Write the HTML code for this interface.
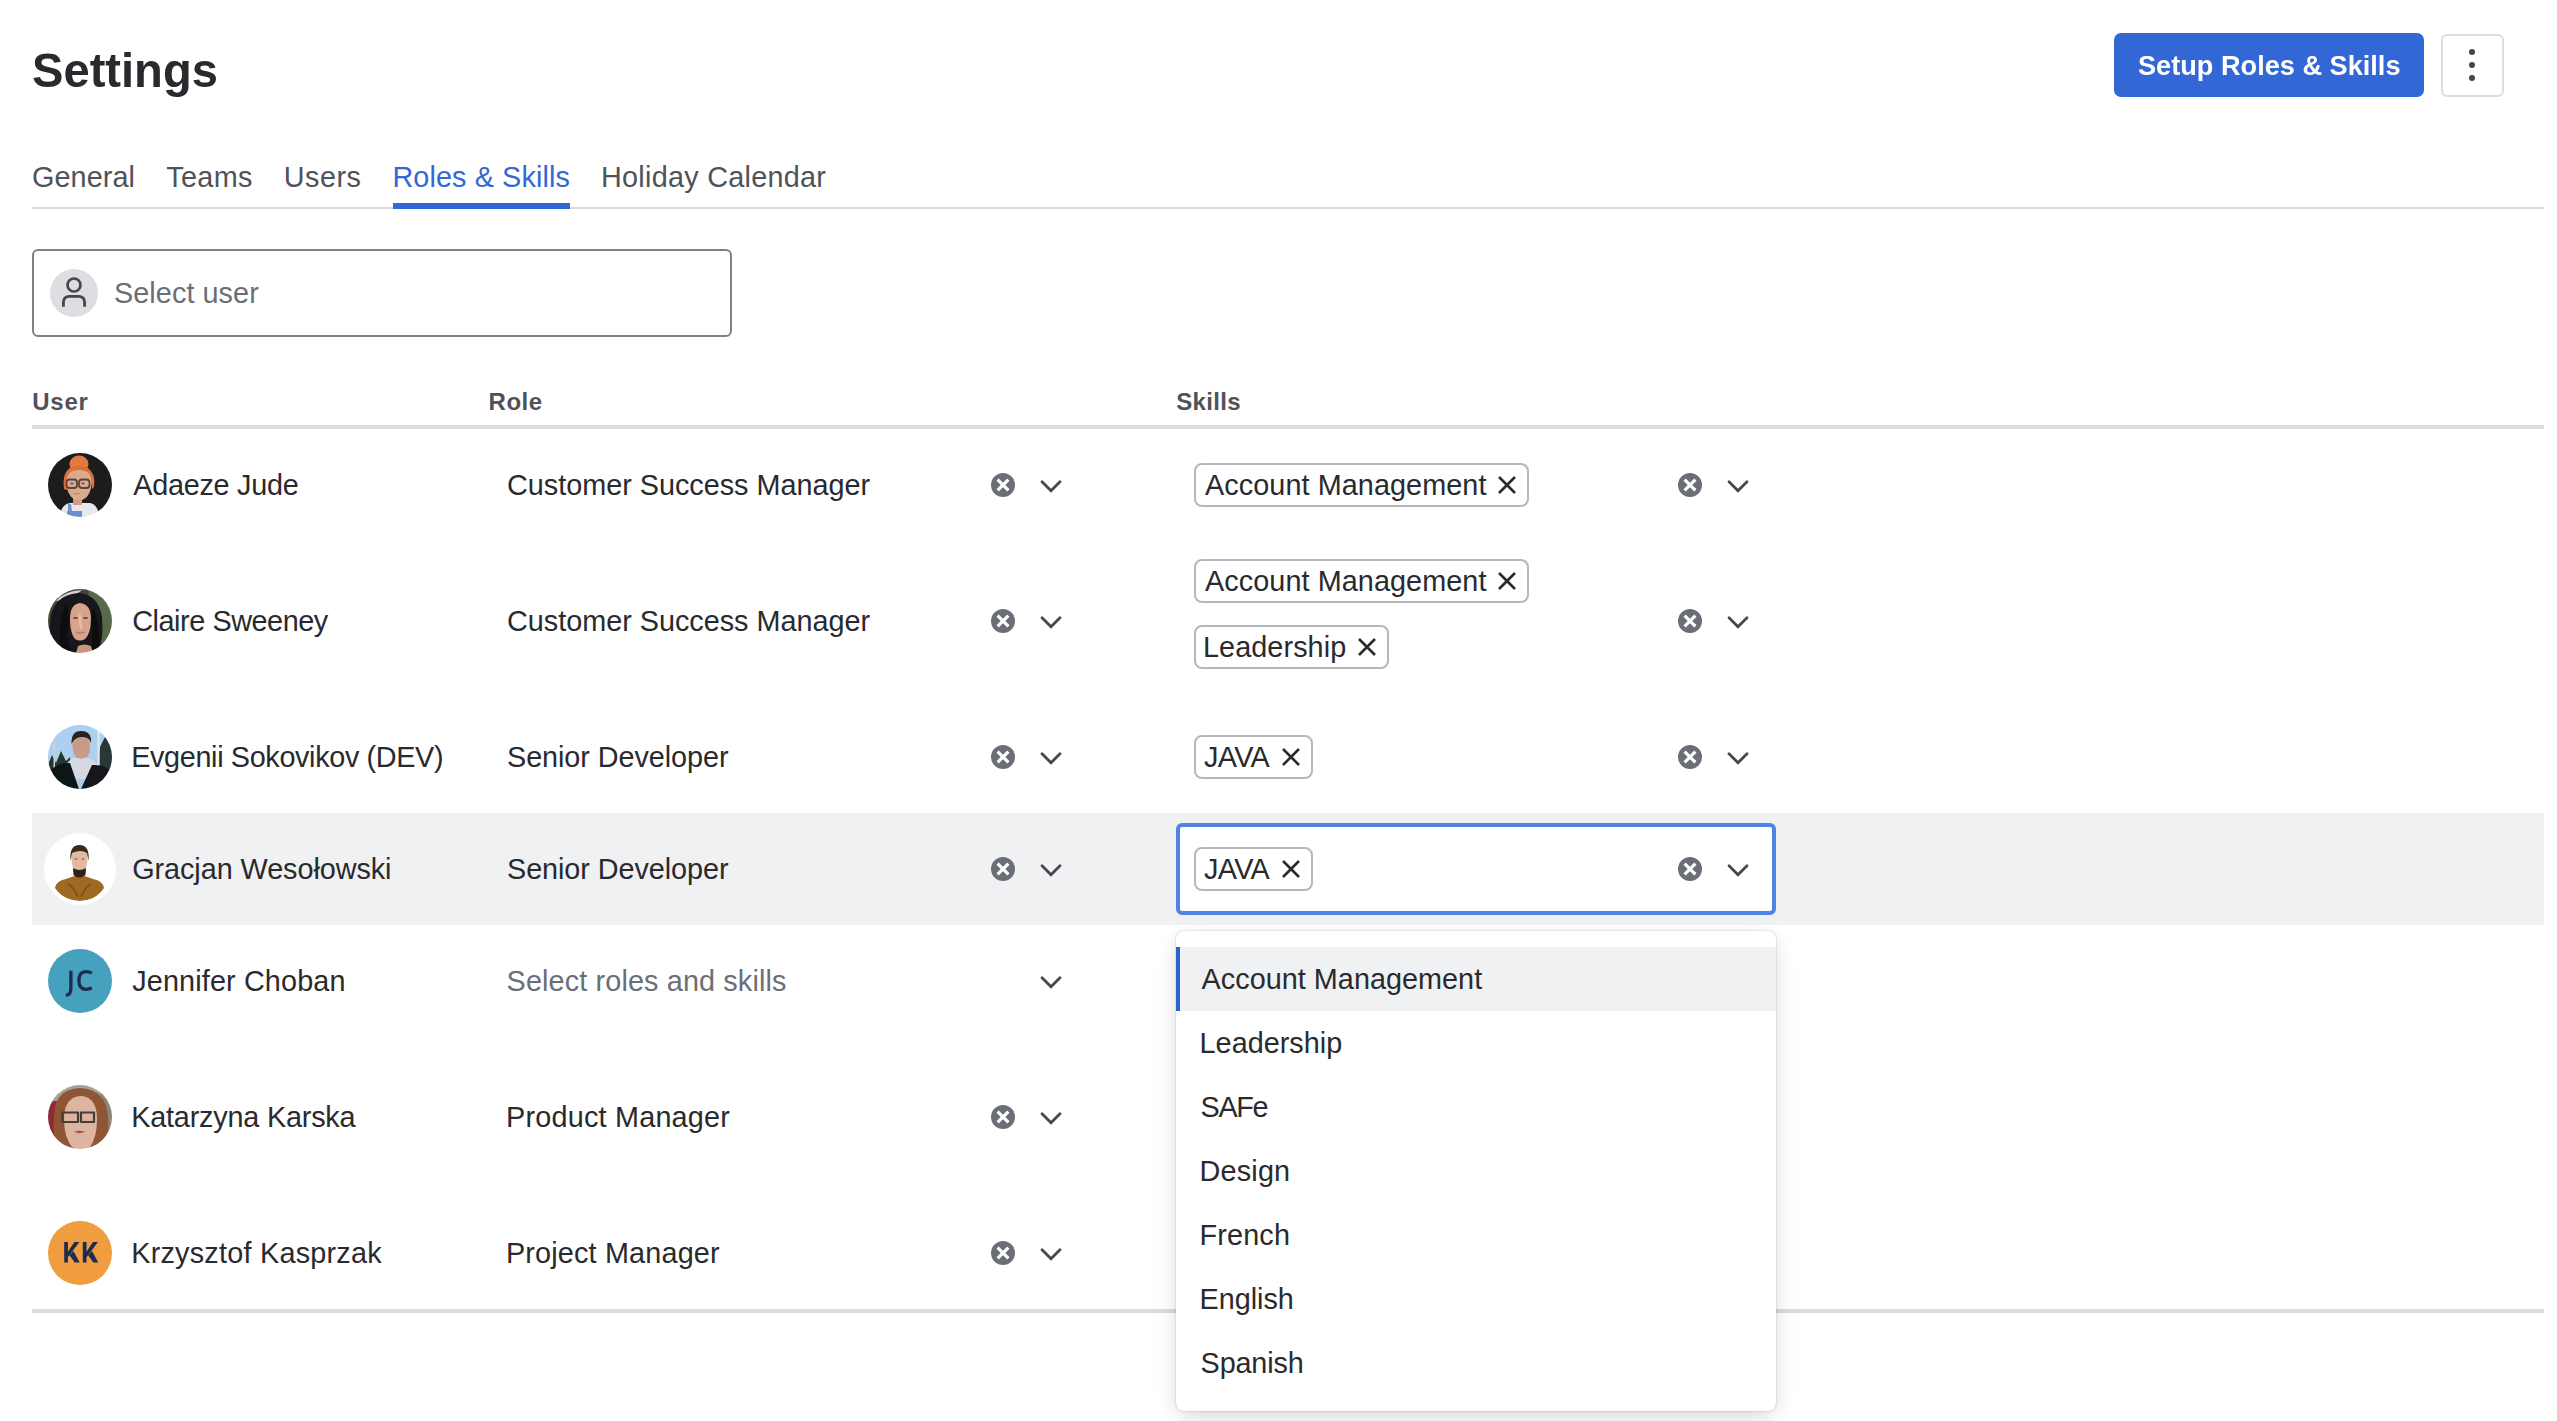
<!DOCTYPE html><html><head><meta charset="utf-8"><style>
html,body{margin:0;padding:0;background:#fff;width:2557px;height:1421px;overflow:hidden;position:relative}
.t{position:absolute;white-space:nowrap;font-family:"Liberation Sans",sans-serif}
</style></head><body>
<div class="t" style="left:32.34px;top:45.7px;font-size:49px;line-height:49px;font-weight:700;color:#292a2e;letter-spacing:0.000px;transform:scaleX(0.9616);transform-origin:0 0;">Settings</div>
<div style="position:absolute;left:2114px;top:33px;width:310px;height:64px;box-sizing:border-box;background:#3367d5;border-radius:7px"></div>
<div class="t" style="left:2138.05px;top:51.3px;font-size:28.5px;line-height:28.5px;font-weight:700;color:#fff;letter-spacing:0.000px;transform:scaleX(0.9526);transform-origin:0 0;">Setup Roles &amp; Skills</div>
<div style="position:absolute;left:2441px;top:34px;width:63px;height:63px;box-sizing:border-box;border:2px solid #dcdde0;border-radius:6px;background:#fff"></div>
<div style="position:absolute;left:2469px;top:49px;width:6px;height:6px;box-sizing:border-box;background:#44464d;border-radius:50%"></div>
<div style="position:absolute;left:2469px;top:62px;width:6px;height:6px;box-sizing:border-box;background:#44464d;border-radius:50%"></div>
<div style="position:absolute;left:2469px;top:75px;width:6px;height:6px;box-sizing:border-box;background:#44464d;border-radius:50%"></div>
<div class="t" style="left:32.10px;top:162.8px;font-size:28.8px;line-height:28.8px;font-weight:400;color:#505258;letter-spacing:0.050px;">General</div>
<div class="t" style="left:166.30px;top:162.8px;font-size:28.8px;line-height:28.8px;font-weight:400;color:#505258;letter-spacing:0.325px;">Teams</div>
<div class="t" style="left:283.80px;top:162.8px;font-size:28.8px;line-height:28.8px;font-weight:400;color:#505258;letter-spacing:0.475px;">Users</div>
<div class="t" style="left:392.40px;top:162.8px;font-size:28.8px;line-height:28.8px;font-weight:400;color:#3367d5;letter-spacing:0.108px;">Roles &amp; Skills</div>
<div class="t" style="left:601.00px;top:162.8px;font-size:28.8px;line-height:28.8px;font-weight:400;color:#505258;letter-spacing:0.267px;">Holiday Calendar</div>
<div style="position:absolute;left:32px;top:207px;width:2512px;height:2px;box-sizing:border-box;background:#d9dadb"></div>
<div style="position:absolute;left:393px;top:203px;width:177px;height:6px;box-sizing:border-box;background:#3367d5"></div>
<div style="position:absolute;left:32px;top:249px;width:700px;height:88px;box-sizing:border-box;border:2px solid #7d818a;border-radius:6px"></div>
<div style="position:absolute;left:50px;top:269px;width:48px;height:48px;box-sizing:border-box;background:#dddee2;border-radius:50%"></div>
<svg style="position:absolute;left:58px;top:277px" width="32" height="32" viewBox="0 0 32 32"><circle cx="16" cy="8" r="6.5" fill="none" stroke="#46474d" stroke-width="2.7"/><path d="M5.4 29.8V25.5Q5.4 19.4 11.5 19.4H20.5Q26.6 19.4 26.6 25.5V29.8" fill="none" stroke="#46474d" stroke-width="2.8"/></svg>
<div class="t" style="left:114.00px;top:279.0px;font-size:28.8px;line-height:28.8px;font-weight:400;color:#6b6e76;letter-spacing:0.070px;">Select user</div>
<div class="t" style="left:32.20px;top:389.8px;font-size:24px;line-height:24px;font-weight:700;color:#505258;letter-spacing:0.767px;">User</div>
<div class="t" style="left:488.60px;top:389.8px;font-size:24px;line-height:24px;font-weight:700;color:#505258;letter-spacing:0.467px;">Role</div>
<div class="t" style="left:1176.20px;top:389.8px;font-size:24px;line-height:24px;font-weight:700;color:#505258;letter-spacing:0.320px;">Skills</div>
<div style="position:absolute;left:32px;top:425px;width:2512px;height:4px;box-sizing:border-box;background:#dcdcdd"></div>
<div style="position:absolute;left:32px;top:813px;width:2512px;height:112px;box-sizing:border-box;background:#f0f1f2"></div>
<svg style="position:absolute;left:48px;top:453px" width="64" height="64" viewBox="0 0 64 64"><defs><clipPath id="ca1"><circle cx="32" cy="32" r="32"/></clipPath><filter id="fa1" x="-10%" y="-10%" width="120%" height="120%"><feGaussianBlur stdDeviation="0.7"/></filter></defs><g clip-path="url(#ca1)"><g filter="url(#fa1)"><rect width="64" height="64" fill="#1d1d1f"/><path d="M12 64Q13 51 22 50L42 50Q50 51 51 64Z" fill="#e8e8ec"/><path d="M20 51L23 51L24 58L20 58Z" fill="#6e95cc"/><path d="M19 58H34V64H19Z" fill="#6a92c9"/><rect x="25" y="43" width="9" height="9" fill="#cf9c80"/><ellipse cx="31" cy="11" rx="9.5" ry="8.5" fill="#e27a3e"/><path d="M16 36Q14 20 22 15Q31 10 40 15Q48 21 46 34L44 36Q43 22 31 18Q20 20 19 37Z" fill="#dd6f36"/><path d="M18.5 30Q18 17 31 17Q44 17 43.5 30Q43 42 36 46Q31 49 26 46Q19 42 18.5 30Z" fill="#d9ab8c"/><rect x="18.5" y="26.5" width="10.5" height="8.5" rx="3" fill="none" stroke="#5a4336" stroke-width="1.8"/><rect x="31" y="26.5" width="10.5" height="8.5" rx="3" fill="none" stroke="#5a4336" stroke-width="1.8"/><ellipse cx="24" cy="30.5" rx="1.6" ry="1.1" fill="#4553a0"/><ellipse cx="35" cy="30.5" rx="1.6" ry="1.1" fill="#4553a0"/><path d="M25.5 40.5Q28.5 41.3 31.5 40.5" stroke="#c07e6a" stroke-width="1.2" fill="none"/></g></g></svg>
<div class="t" style="left:133.20px;top:470.9px;font-size:28.8px;line-height:28.8px;font-weight:400;color:#292a2e;letter-spacing:-0.260px;">Adaeze Jude</div>
<div class="t" style="left:507.00px;top:470.9px;font-size:28.8px;line-height:28.8px;font-weight:400;color:#292a2e;letter-spacing:-0.013px;">Customer Success Manager</div>
<svg style="position:absolute;left:991px;top:473px" width="24" height="24" viewBox="0 0 24 24"><circle cx="12" cy="12" r="12" fill="#6b6e76"/><path d="M6.6 6.6L17.4 17.4M17.4 6.6L6.6 17.4" stroke="#fff" stroke-width="3.2"/></svg>
<svg style="position:absolute;left:1039px;top:474px" width="24" height="24" viewBox="0 0 24 24"><path d="M3 7.8L12 16.8L21 7.8" fill="none" stroke="#46484f" stroke-width="2.8" stroke-linecap="round"/></svg>
<svg style="position:absolute;left:48px;top:589px" width="64" height="64" viewBox="0 0 64 64"><defs><clipPath id="ca2"><circle cx="32" cy="32" r="32"/></clipPath><filter id="fa2" x="-10%" y="-10%" width="120%" height="120%"><feGaussianBlur stdDeviation="0.7"/></filter></defs><g clip-path="url(#ca2)"><g filter="url(#fa2)"><rect width="64" height="64" fill="#3d4a37"/><path d="M40 0H64V64H48Z" fill="#566a48"/><path d="M8 12Q16 2 34 1L22 10Z" fill="#cfd2d6"/><path d="M2 34Q4 6 30 4Q50 5 54 28Q56 50 50 64H8Q0 52 2 34Z" fill="#18151a"/><path d="M22 30Q22 15 32 14Q43 15 43 30Q43 44 37 50Q32 53 27 50Q22 44 22 30Z" fill="#d6a38c"/><path d="M30 26Q33 24 32 34Q34 38 33 40" stroke="#e8bca6" stroke-width="2.5" fill="none"/><ellipse cx="27.5" cy="29" rx="2.5" ry="1" fill="#6a463c"/><ellipse cx="37.5" cy="29" rx="2.5" ry="1" fill="#6a463c"/><path d="M27.5 43Q32 45 37 43" stroke="#b97a70" stroke-width="1.6" fill="none"/><path d="M18 14Q22 22 20 40Q18 52 24 62L14 64Q8 40 18 14ZM45 18Q42 30 44 46Q46 56 40 64H50Q54 40 45 18Z" fill="#0f0d10"/><path d="M30 57Q36 54 43 57L45 64H28Z" fill="#c99480"/></g></g></svg>
<div class="t" style="left:132.20px;top:606.9px;font-size:28.8px;line-height:28.8px;font-weight:400;color:#292a2e;letter-spacing:-0.431px;">Claire Sweeney</div>
<div class="t" style="left:507.00px;top:606.9px;font-size:28.8px;line-height:28.8px;font-weight:400;color:#292a2e;letter-spacing:-0.013px;">Customer Success Manager</div>
<svg style="position:absolute;left:991px;top:609px" width="24" height="24" viewBox="0 0 24 24"><circle cx="12" cy="12" r="12" fill="#6b6e76"/><path d="M6.6 6.6L17.4 17.4M17.4 6.6L6.6 17.4" stroke="#fff" stroke-width="3.2"/></svg>
<svg style="position:absolute;left:1039px;top:610px" width="24" height="24" viewBox="0 0 24 24"><path d="M3 7.8L12 16.8L21 7.8" fill="none" stroke="#46484f" stroke-width="2.8" stroke-linecap="round"/></svg>
<svg style="position:absolute;left:48px;top:725px" width="64" height="64" viewBox="0 0 64 64"><defs><clipPath id="ca3"><circle cx="32" cy="32" r="32"/></clipPath><filter id="fa3" x="-10%" y="-10%" width="120%" height="120%"><feGaussianBlur stdDeviation="0.7"/></filter></defs><g clip-path="url(#ca3)"><g filter="url(#fa3)"><rect width="64" height="64" fill="#aed0f0"/><path d="M0 64V40L4 30L8 38L13 26L18 36L22 32L24 64Z" fill="#28352f"/><path d="M64 64V18L58 10L52 22L47 64Z" fill="#2c3936"/><rect x="49.5" y="2" width="2.2" height="42" fill="#e4e8ec"/><rect x="5.5" y="12" width="1.5" height="32" fill="#c9d2da"/><path d="M24.5 22Q24 10 33 10Q42 10 42 22Q42 33 34 36Q25 34 24.5 22Z" fill="#c69c88"/><path d="M23.5 19Q23 6 33 6Q44 6 43 18Q41 11 33 12Q27 12 23.5 19Z" fill="#2b2320"/><path d="M18 40Q24 30 33 34Q42 30 50 40L46 54H22Z" fill="#d5d9e2"/><path d="M-2 64L2 46Q10 37 22 38L31 64Z" fill="#101218"/><path d="M66 64L64 48Q58 39 44 40L33 64Z" fill="#13151b"/></g></g></svg>
<div class="t" style="left:131.20px;top:742.9px;font-size:28.8px;line-height:28.8px;font-weight:400;color:#292a2e;letter-spacing:-0.350px;">Evgenii Sokovikov (DEV)</div>
<div class="t" style="left:507.00px;top:742.9px;font-size:28.8px;line-height:28.8px;font-weight:400;color:#292a2e;letter-spacing:-0.067px;">Senior Developer</div>
<svg style="position:absolute;left:991px;top:745px" width="24" height="24" viewBox="0 0 24 24"><circle cx="12" cy="12" r="12" fill="#6b6e76"/><path d="M6.6 6.6L17.4 17.4M17.4 6.6L6.6 17.4" stroke="#fff" stroke-width="3.2"/></svg>
<svg style="position:absolute;left:1039px;top:746px" width="24" height="24" viewBox="0 0 24 24"><path d="M3 7.8L12 16.8L21 7.8" fill="none" stroke="#46484f" stroke-width="2.8" stroke-linecap="round"/></svg>
<div style="position:absolute;left:44px;top:833px;width:72px;height:72px;box-sizing:border-box;background:#fff;border-radius:50%"></div>
<svg style="position:absolute;left:48px;top:837px" width="64" height="64" viewBox="0 0 64 64"><defs><clipPath id="ca4"><circle cx="32" cy="32" r="32"/></clipPath><filter id="fa4" x="-10%" y="-10%" width="120%" height="120%"><feGaussianBlur stdDeviation="0.7"/></filter></defs><g clip-path="url(#ca4)"><g filter="url(#fa4)"><rect width="64" height="64" fill="#fff"/><path d="M7 51Q8 44 18 42Q25 39 31.5 38Q38 39 45 42Q55 44 56 51Q47 64 31.5 64Q16 64 7 51Z" fill="#9c6a22"/><path d="M20 47Q26 50 30 60M43 47Q37 50 33 60" stroke="#7a5016" stroke-width="1.5" fill="none"/><path d="M23.5 22Q23 10 31.5 10Q40 10 39.5 22Q39.5 34 31.5 37Q23.5 34 23.5 22Z" fill="#e3b9a2"/><path d="M22.5 24Q21 8 31.5 8Q42 8 40.5 24L39 16Q33 12 24 16Z" fill="#3b2a1e"/><path d="M25 31Q31.5 35 38 31L37.5 38Q31.5 43 25.5 38Z" fill="#2f2016"/><ellipse cx="28" cy="22" rx="1.6" ry=".8" fill="#6b6f78"/><ellipse cx="35" cy="22" rx="1.6" ry=".8" fill="#6b6f78"/></g></g></svg>
<div class="t" style="left:132.20px;top:854.9px;font-size:28.8px;line-height:28.8px;font-weight:400;color:#292a2e;letter-spacing:-0.059px;">Gracjan Wesołowski</div>
<div class="t" style="left:507.00px;top:854.9px;font-size:28.8px;line-height:28.8px;font-weight:400;color:#292a2e;letter-spacing:-0.067px;">Senior Developer</div>
<svg style="position:absolute;left:991px;top:857px" width="24" height="24" viewBox="0 0 24 24"><circle cx="12" cy="12" r="12" fill="#6b6e76"/><path d="M6.6 6.6L17.4 17.4M17.4 6.6L6.6 17.4" stroke="#fff" stroke-width="3.2"/></svg>
<svg style="position:absolute;left:1039px;top:858px" width="24" height="24" viewBox="0 0 24 24"><path d="M3 7.8L12 16.8L21 7.8" fill="none" stroke="#46484f" stroke-width="2.8" stroke-linecap="round"/></svg>
<div style="position:absolute;left:48px;top:949px;width:64px;height:64px;box-sizing:border-box;background:#46a1be;border-radius:50%"></div>
<svg style="position:absolute;left:48px;top:949px" width="64" height="64" viewBox="0 0 64 64"><path d="M22.9 21.7V39.6Q22.9 46.2 17.8 46.2" fill="none" stroke="#1d2b4f" stroke-width="3.3"/><path d="M43.8 24.2Q41.2 22.6 38.2 22.6Q30.9 22.6 30.9 31.4Q30.9 40.3 38.2 40.3Q41.2 40.3 43.8 38.8" fill="none" stroke="#1d2b4f" stroke-width="3.3"/></svg><div class="t" style="left:132.20px;top:966.9px;font-size:28.8px;line-height:28.8px;font-weight:400;color:#292a2e;letter-spacing:0.143px;">Jennifer Choban</div>
<div class="t" style="left:506.60px;top:966.9px;font-size:28.8px;line-height:28.8px;font-weight:400;color:#6b6e76;letter-spacing:0.132px;">Select roles and skills</div>
<svg style="position:absolute;left:1039px;top:970px" width="24" height="24" viewBox="0 0 24 24"><path d="M3 7.8L12 16.8L21 7.8" fill="none" stroke="#46484f" stroke-width="2.8" stroke-linecap="round"/></svg>
<svg style="position:absolute;left:48px;top:1085px" width="64" height="64" viewBox="0 0 64 64"><defs><clipPath id="ca6"><circle cx="32" cy="32" r="32"/></clipPath><filter id="fa6" x="-10%" y="-10%" width="120%" height="120%"><feGaussianBlur stdDeviation="0.7"/></filter></defs><g clip-path="url(#ca6)"><g filter="url(#fa6)"><rect width="64" height="64" fill="#a8a194"/><path d="M0 18Q8 14 13 18V64H0Z" fill="#8d2b39"/><path d="M52 0H64V64H54Z" fill="#8c8578"/><path d="M6 32Q6 4 32 3Q58 4 60 32Q62 52 54 64H10Q4 50 6 32Z" fill="#8e5636"/><path d="M16 34Q16 12 33 11Q49 12 49 34Q49 52 42 62Q33 68 24 62Q16 52 16 34Z" fill="#ddb4a0"/><path d="M20 20Q33 8 46 20Q40 14 33 14Q26 14 20 20Z" fill="#e8c6b4"/><path d="M14.5 27.5H30V37H14.5Z" fill="none" stroke="#463c38" stroke-width="2.2" stroke-linejoin="round"/><path d="M33 27.5H46V37H33Z" fill="none" stroke="#463c38" stroke-width="2.2" stroke-linejoin="round"/><path d="M26 46.5Q31.5 45 37 46.5Q31.5 50 26 46.5Z" fill="#b04a5c"/></g></g></svg>
<div class="t" style="left:131.20px;top:1102.9px;font-size:28.8px;line-height:28.8px;font-weight:400;color:#292a2e;letter-spacing:-0.193px;">Katarzyna Karska</div>
<div class="t" style="left:506.00px;top:1102.9px;font-size:28.8px;line-height:28.8px;font-weight:400;color:#292a2e;letter-spacing:0.214px;">Product Manager</div>
<svg style="position:absolute;left:991px;top:1105px" width="24" height="24" viewBox="0 0 24 24"><circle cx="12" cy="12" r="12" fill="#6b6e76"/><path d="M6.6 6.6L17.4 17.4M17.4 6.6L6.6 17.4" stroke="#fff" stroke-width="3.2"/></svg>
<svg style="position:absolute;left:1039px;top:1106px" width="24" height="24" viewBox="0 0 24 24"><path d="M3 7.8L12 16.8L21 7.8" fill="none" stroke="#46484f" stroke-width="2.8" stroke-linecap="round"/></svg>
<div style="position:absolute;left:48px;top:1221px;width:64px;height:64px;box-sizing:border-box;background:#f09d3f;border-radius:50%"></div>
<svg style="position:absolute;left:48px;top:1221px" width="64" height="64" viewBox="0 0 64 64"><path d="M16.2 21H19.9V41.5H16.2ZM19.0 31.9L26.4 21H31.4L19.0 37.6ZM21.6 34.3L25.4 30.0L31.7 41.5H26.6Z" fill="#1d2b50"/><path d="M34.8 21H38.5V41.5H34.8ZM37.6 31.9L45.0 21H50.0L37.6 37.6ZM40.2 34.3L44.0 30.0L50.3 41.5H45.2Z" fill="#1d2b50"/></svg><div class="t" style="left:131.20px;top:1238.9px;font-size:28.8px;line-height:28.8px;font-weight:400;color:#292a2e;letter-spacing:0.235px;">Krzysztof Kasprzak</div>
<div class="t" style="left:506.00px;top:1238.9px;font-size:28.8px;line-height:28.8px;font-weight:400;color:#292a2e;letter-spacing:0.164px;">Project Manager</div>
<svg style="position:absolute;left:991px;top:1241px" width="24" height="24" viewBox="0 0 24 24"><circle cx="12" cy="12" r="12" fill="#6b6e76"/><path d="M6.6 6.6L17.4 17.4M17.4 6.6L6.6 17.4" stroke="#fff" stroke-width="3.2"/></svg>
<svg style="position:absolute;left:1039px;top:1242px" width="24" height="24" viewBox="0 0 24 24"><path d="M3 7.8L12 16.8L21 7.8" fill="none" stroke="#46484f" stroke-width="2.8" stroke-linecap="round"/></svg>
<div style="position:absolute;left:1194px;top:463px;width:335px;height:44px;box-sizing:border-box;border:2px solid #b5b7bc;border-radius:8px;background:#fff"></div>
<div class="t" style="left:1205.00px;top:470.6px;font-size:28.8px;line-height:28.8px;font-weight:400;color:#292a2e;letter-spacing:0.076px;">Account Management</div>
<svg style="position:absolute;left:1498px;top:476px" width="18" height="18" viewBox="0 0 18 18"><path d="M1 1L17 17M17 1L1 17" stroke="#292a2e" stroke-width="2.6"/></svg>
<svg style="position:absolute;left:1678px;top:473px" width="24" height="24" viewBox="0 0 24 24"><circle cx="12" cy="12" r="12" fill="#6b6e76"/><path d="M6.6 6.6L17.4 17.4M17.4 6.6L6.6 17.4" stroke="#fff" stroke-width="3.2"/></svg>
<svg style="position:absolute;left:1726px;top:474px" width="24" height="24" viewBox="0 0 24 24"><path d="M3 7.8L12 16.8L21 7.8" fill="none" stroke="#46484f" stroke-width="2.8" stroke-linecap="round"/></svg>
<div style="position:absolute;left:1194px;top:559px;width:335px;height:44px;box-sizing:border-box;border:2px solid #b5b7bc;border-radius:8px;background:#fff"></div>
<div class="t" style="left:1205.00px;top:566.6px;font-size:28.8px;line-height:28.8px;font-weight:400;color:#292a2e;letter-spacing:0.076px;">Account Management</div>
<svg style="position:absolute;left:1498px;top:572px" width="18" height="18" viewBox="0 0 18 18"><path d="M1 1L17 17M17 1L1 17" stroke="#292a2e" stroke-width="2.6"/></svg>
<div style="position:absolute;left:1194px;top:625px;width:195px;height:44px;box-sizing:border-box;border:2px solid #b5b7bc;border-radius:8px;background:#fff"></div>
<div class="t" style="left:1203.00px;top:632.6px;font-size:28.8px;line-height:28.8px;font-weight:400;color:#292a2e;letter-spacing:0.078px;">Leadership</div>
<svg style="position:absolute;left:1358px;top:638px" width="18" height="18" viewBox="0 0 18 18"><path d="M1 1L17 17M17 1L1 17" stroke="#292a2e" stroke-width="2.6"/></svg>
<svg style="position:absolute;left:1678px;top:609px" width="24" height="24" viewBox="0 0 24 24"><circle cx="12" cy="12" r="12" fill="#6b6e76"/><path d="M6.6 6.6L17.4 17.4M17.4 6.6L6.6 17.4" stroke="#fff" stroke-width="3.2"/></svg>
<svg style="position:absolute;left:1726px;top:610px" width="24" height="24" viewBox="0 0 24 24"><path d="M3 7.8L12 16.8L21 7.8" fill="none" stroke="#46484f" stroke-width="2.8" stroke-linecap="round"/></svg>
<div style="position:absolute;left:1194px;top:735px;width:119px;height:44px;box-sizing:border-box;border:2px solid #b5b7bc;border-radius:8px;background:#fff"></div>
<div class="t" style="left:1204.00px;top:742.6px;font-size:28.8px;line-height:28.8px;font-weight:400;color:#292a2e;letter-spacing:-0.667px;">JAVA</div>
<svg style="position:absolute;left:1282px;top:748px" width="18" height="18" viewBox="0 0 18 18"><path d="M1 1L17 17M17 1L1 17" stroke="#292a2e" stroke-width="2.6"/></svg>
<svg style="position:absolute;left:1678px;top:745px" width="24" height="24" viewBox="0 0 24 24"><circle cx="12" cy="12" r="12" fill="#6b6e76"/><path d="M6.6 6.6L17.4 17.4M17.4 6.6L6.6 17.4" stroke="#fff" stroke-width="3.2"/></svg>
<svg style="position:absolute;left:1726px;top:746px" width="24" height="24" viewBox="0 0 24 24"><path d="M3 7.8L12 16.8L21 7.8" fill="none" stroke="#46484f" stroke-width="2.8" stroke-linecap="round"/></svg>
<div style="position:absolute;left:1176px;top:823px;width:600px;height:92px;box-sizing:border-box;border:4px solid #4f84e3;border-radius:6px;background:#fff"></div>
<div style="position:absolute;left:1194px;top:847px;width:119px;height:44px;box-sizing:border-box;border:2px solid #b5b7bc;border-radius:8px;background:#fff"></div>
<div class="t" style="left:1204.00px;top:854.6px;font-size:28.8px;line-height:28.8px;font-weight:400;color:#292a2e;letter-spacing:-0.667px;">JAVA</div>
<svg style="position:absolute;left:1282px;top:860px" width="18" height="18" viewBox="0 0 18 18"><path d="M1 1L17 17M17 1L1 17" stroke="#292a2e" stroke-width="2.6"/></svg>
<svg style="position:absolute;left:1678px;top:857px" width="24" height="24" viewBox="0 0 24 24"><circle cx="12" cy="12" r="12" fill="#6b6e76"/><path d="M6.6 6.6L17.4 17.4M17.4 6.6L6.6 17.4" stroke="#fff" stroke-width="3.2"/></svg>
<svg style="position:absolute;left:1726px;top:858px" width="24" height="24" viewBox="0 0 24 24"><path d="M3 7.8L12 16.8L21 7.8" fill="none" stroke="#46484f" stroke-width="2.8" stroke-linecap="round"/></svg>
<div style="position:absolute;left:32px;top:1309px;width:2512px;height:4px;box-sizing:border-box;background:#dcdcdd"></div>
<div style="position:absolute;left:1176px;top:931px;width:600px;height:480px;box-sizing:border-box;background:#fff;border-radius:8px;box-shadow:0 8px 24px -4px rgba(30,31,33,0.20),0 0 2px rgba(30,31,33,0.30)"></div>
<div style="position:absolute;left:1176px;top:947px;width:600px;height:64px;box-sizing:border-box;background:#f0f1f2"></div>
<div style="position:absolute;left:1176px;top:947px;width:4px;height:64px;box-sizing:border-box;background:#2b63d0"></div>
<div class="t" style="left:1201.60px;top:964.8px;font-size:28.8px;line-height:28.8px;font-weight:400;color:#292a2e;letter-spacing:0.024px;">Account Management</div>
<div class="t" style="left:1199.60px;top:1028.8px;font-size:28.8px;line-height:28.8px;font-weight:400;color:#292a2e;letter-spacing:0.011px;">Leadership</div>
<div class="t" style="left:1200.60px;top:1092.8px;font-size:28.8px;line-height:28.8px;font-weight:400;color:#292a2e;letter-spacing:-1.400px;">SAFe</div>
<div class="t" style="left:1199.60px;top:1156.8px;font-size:28.8px;line-height:28.8px;font-weight:400;color:#292a2e;letter-spacing:0.180px;">Design</div>
<div class="t" style="left:1199.60px;top:1220.8px;font-size:28.8px;line-height:28.8px;font-weight:400;color:#292a2e;letter-spacing:0.140px;">French</div>
<div class="t" style="left:1199.60px;top:1284.8px;font-size:28.8px;line-height:28.8px;font-weight:400;color:#292a2e;letter-spacing:-0.050px;">English</div>
<div class="t" style="left:1200.60px;top:1348.8px;font-size:28.8px;line-height:28.8px;font-weight:400;color:#292a2e;letter-spacing:-0.167px;">Spanish</div>
</body></html>
